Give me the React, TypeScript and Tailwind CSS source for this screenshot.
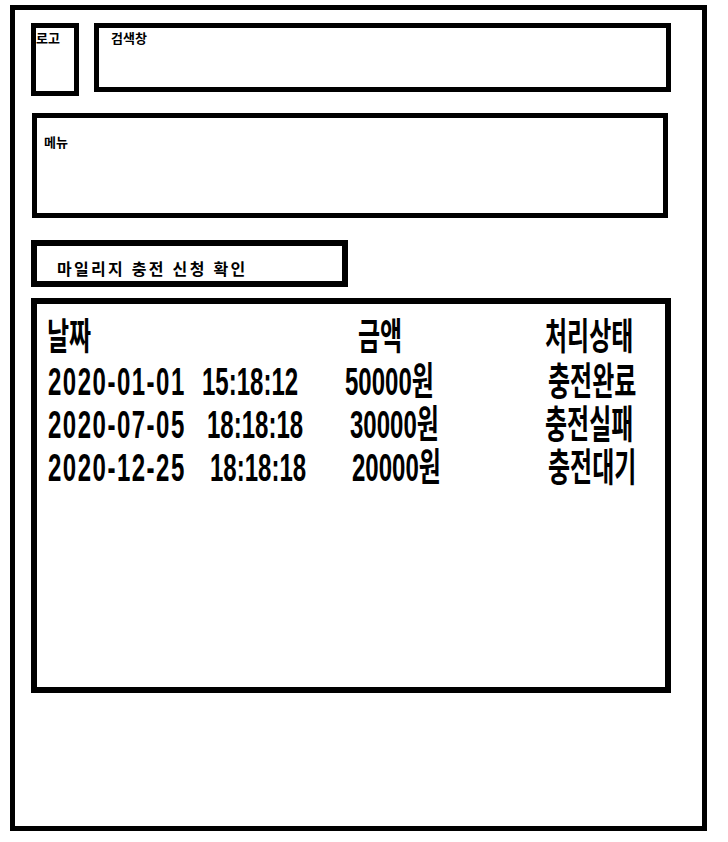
import React from 'react';

const rows = [
    { date: '2020-01-01', time: '15:18:12', amount: '50000원', status: '충전완료', w: ['w-[154px]', 'w-[143px]', 'w-[203px]'] },
    { date: '2020-07-05', time: '18:18:18', amount: '30000원', status: '충전실패', w: ['w-[159px]', 'w-[143px]', 'w-[195px]'] },
    { date: '2020-12-25', time: '18:18:18', amount: '20000원', status: '충전대기', w: ['w-[162px]', 'w-[142px]', 'w-[196px]'] },
];

export default function App() {
    return (
        <div className="min-h-screen bg-white pt-[5px] pl-[10px] font-['Liberation_Sans','Noto_Sans_CJK_KR',sans-serif] text-black">
            {/* Outer frame */}
            <div className="w-[697px] h-[826px] border-[5px] border-black pl-[16px] pt-[13px]">

                {/* Header: logo + search */}
                <div className="flex items-start gap-[15px]">
                    <div className="w-[48px] h-[73px] border-[5px] border-black pt-[4px]">
                        <span className="block text-[13px] font-bold leading-none">로고</span>
                    </div>
                    <div className="w-[577px] h-[69px] border-[5px] border-black pl-[12px] pt-[4px]">
                        <span className="block text-[13px] font-bold leading-none">검색창</span>
                    </div>
                </div>

                {/* Menu */}
                <div className="ml-[1px] mt-[17px] w-[636px] h-[105px] border-[5px] border-black pl-[7px] pt-[18px]">
                    <span className="block text-[13px] font-bold leading-none">메뉴</span>
                </div>

                {/* Page title */}
                <div className="mt-[22px] w-[317px] h-[47px] border-[6px] border-black pl-[20px] pt-[16px]">
                    <span className="block text-[16px] font-bold leading-none tracking-[2.3px]">마일리지 충전 신청 확인</span>
                </div>

                {/* Mileage table */}
                <div className="mt-[11px] w-[640px] h-[395px] border-[6px] border-black pt-[12px]">
                    <div className="flex h-[44px] items-center pl-[10px] text-[24px] font-bold leading-none scale-y-[1.55]">
                        <span className="w-[311px]">날짜</span>
                        <span className="w-[187px]">금액</span>
                        <span>처리상태</span>
                    </div>
                    {rows.map((r) => (
                        <div key={r.date} className="flex h-[43px] items-center pl-[11px] text-[24px] font-bold leading-none scale-y-[1.6]">
                            <span className={`${r.w[0]} tracking-[1.5px]`}>{r.date}</span>
                            <span className={r.w[1]}>{r.time}</span>
                            <span className={r.w[2]}>{r.amount}</span>
                            <span>{r.status}</span>
                        </div>
                    ))}
                </div>
            </div>
        </div>
    );
}
